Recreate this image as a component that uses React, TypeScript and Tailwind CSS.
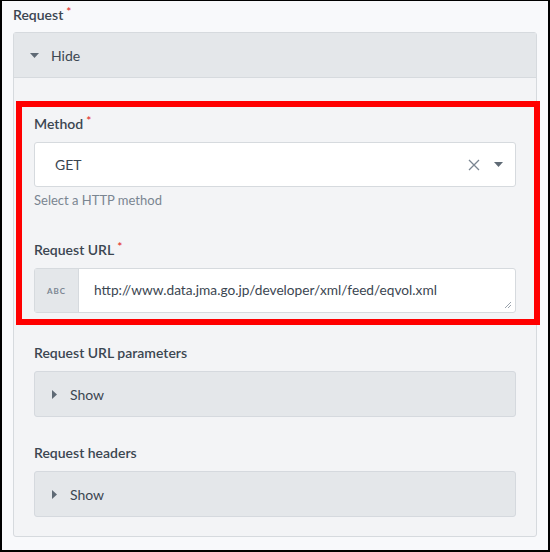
import React from "react";

const Caret = ({ dir }: { dir: "down" | "right" }) =>
	dir === "down" ? (
		<svg width="9" height="5" viewBox="0 0 9 5" className="shrink-0">
			<path d="M0 0h9L4.5 5z" fill="#5f6a75" />
		</svg>
	) : (
		<svg width="5" height="9" viewBox="0 0 5 9" className="shrink-0">
			<path d="M0 0v9l5-4.5z" fill="#5f6a75" />
		</svg>
	);

const Label = ({ text, required }: { text: string; required?: boolean }) => (
	<div className="h-5 flex items-center text-[14px] font-semibold text-[#3b4651]">
		{text}
		{required && <span className="text-[#e3342f] text-[12px] ml-[3px] -mt-[5px]">*</span>}
	</div>
);

const ShowBox = () => (
	<div className="h-[46px] bg-[#e4e7ea] border border-[#d5d9de] rounded-[3px] flex items-center pl-[17px] gap-[13px] text-[14px] text-[#3b4651]">
		<Caret dir="right" />
		<span>Show</span>
	</div>
);

const App = () => {
	return (
		<div
			className="relative w-[550px] h-[552px] bg-[#f8f9fb] border-black border-t border-x-2 border-b-2 pt-[3px]"
			style={{ fontFamily: "Lato, 'Open Sans', sans-serif" }}
		>
			<div className="ml-[11px]">
				<Label text="Request" required />
			</div>
			<div className="ml-[11px] mt-[8px] w-[524px] border border-[#d6dade] rounded-[3px] bg-[#f3f4f6]">
				<div className="h-[45px] bg-[#e4e7ea] border-b border-[#d6dade] flex items-center pl-[16px] gap-[12px] text-[14px] text-[#3b4651]">
					<Caret dir="down" />
					<span>Hide</span>
				</div>
				<div className="px-[20px] pt-[35px] pb-[19px] flex flex-col">
					<Label text="Method" required />
					<div className="mt-[9px] h-[45px] bg-white border border-[#d6dade] rounded-[3px] flex items-center pl-[20px] pr-[12px] text-[14px] text-[#3b4651]">
						<span className="flex-1">GET</span>
						<svg width="12" height="12" viewBox="0 0 12 12" className="mr-[14px]">
							<path d="M1 1l10 10M11 1L1 11" stroke="#7a8591" strokeWidth="1.3" />
						</svg>
						<Caret dir="down" />
					</div>
					<div className="mt-[5px] h-[18px] flex items-center text-[13px] text-[#7a8591]">
						Select a HTTP method
					</div>
					<div className="mt-[29px]">
						<Label text="Request URL" required />
					</div>
					<div className="relative mt-[9px] h-[45px] bg-white border border-[#d6dade] rounded-[3px] flex items-stretch text-[13.7px] text-[#3b4651]">
						<div className="w-[44px] bg-[#e4e7ea] border-r border-[#d6dade] flex items-center justify-center text-[8px] font-bold tracking-[1px] text-[#7a8591]">
							ABC
						</div>
						<div className="flex items-center pl-[15px]">
							http://www.data.jma.go.jp/developer/xml/feed/eqvol.xml
						</div>
						<svg width="8" height="8" viewBox="0 0 8 8" className="absolute right-[3px] bottom-[3px]">
							<path d="M7 1L1 7M7 4L4 7" stroke="#9aa3ad" strokeWidth="1" />
						</svg>
					</div>
					<div className="mt-[29px]">
						<Label text="Request URL parameters" />
					</div>
					<div className="mt-[9px]">
						<ShowBox />
					</div>
					<div className="mt-[25px]">
						<Label text="Request headers" />
					</div>
					<div className="mt-[9px]">
						<ShowBox />
					</div>
				</div>
			</div>
			<div className="absolute left-[14px] top-[100px] w-[524px] h-[224px] border-[6px] border-[#ff0000] pointer-events-none" />
		</div>
	);
};

export default App;
